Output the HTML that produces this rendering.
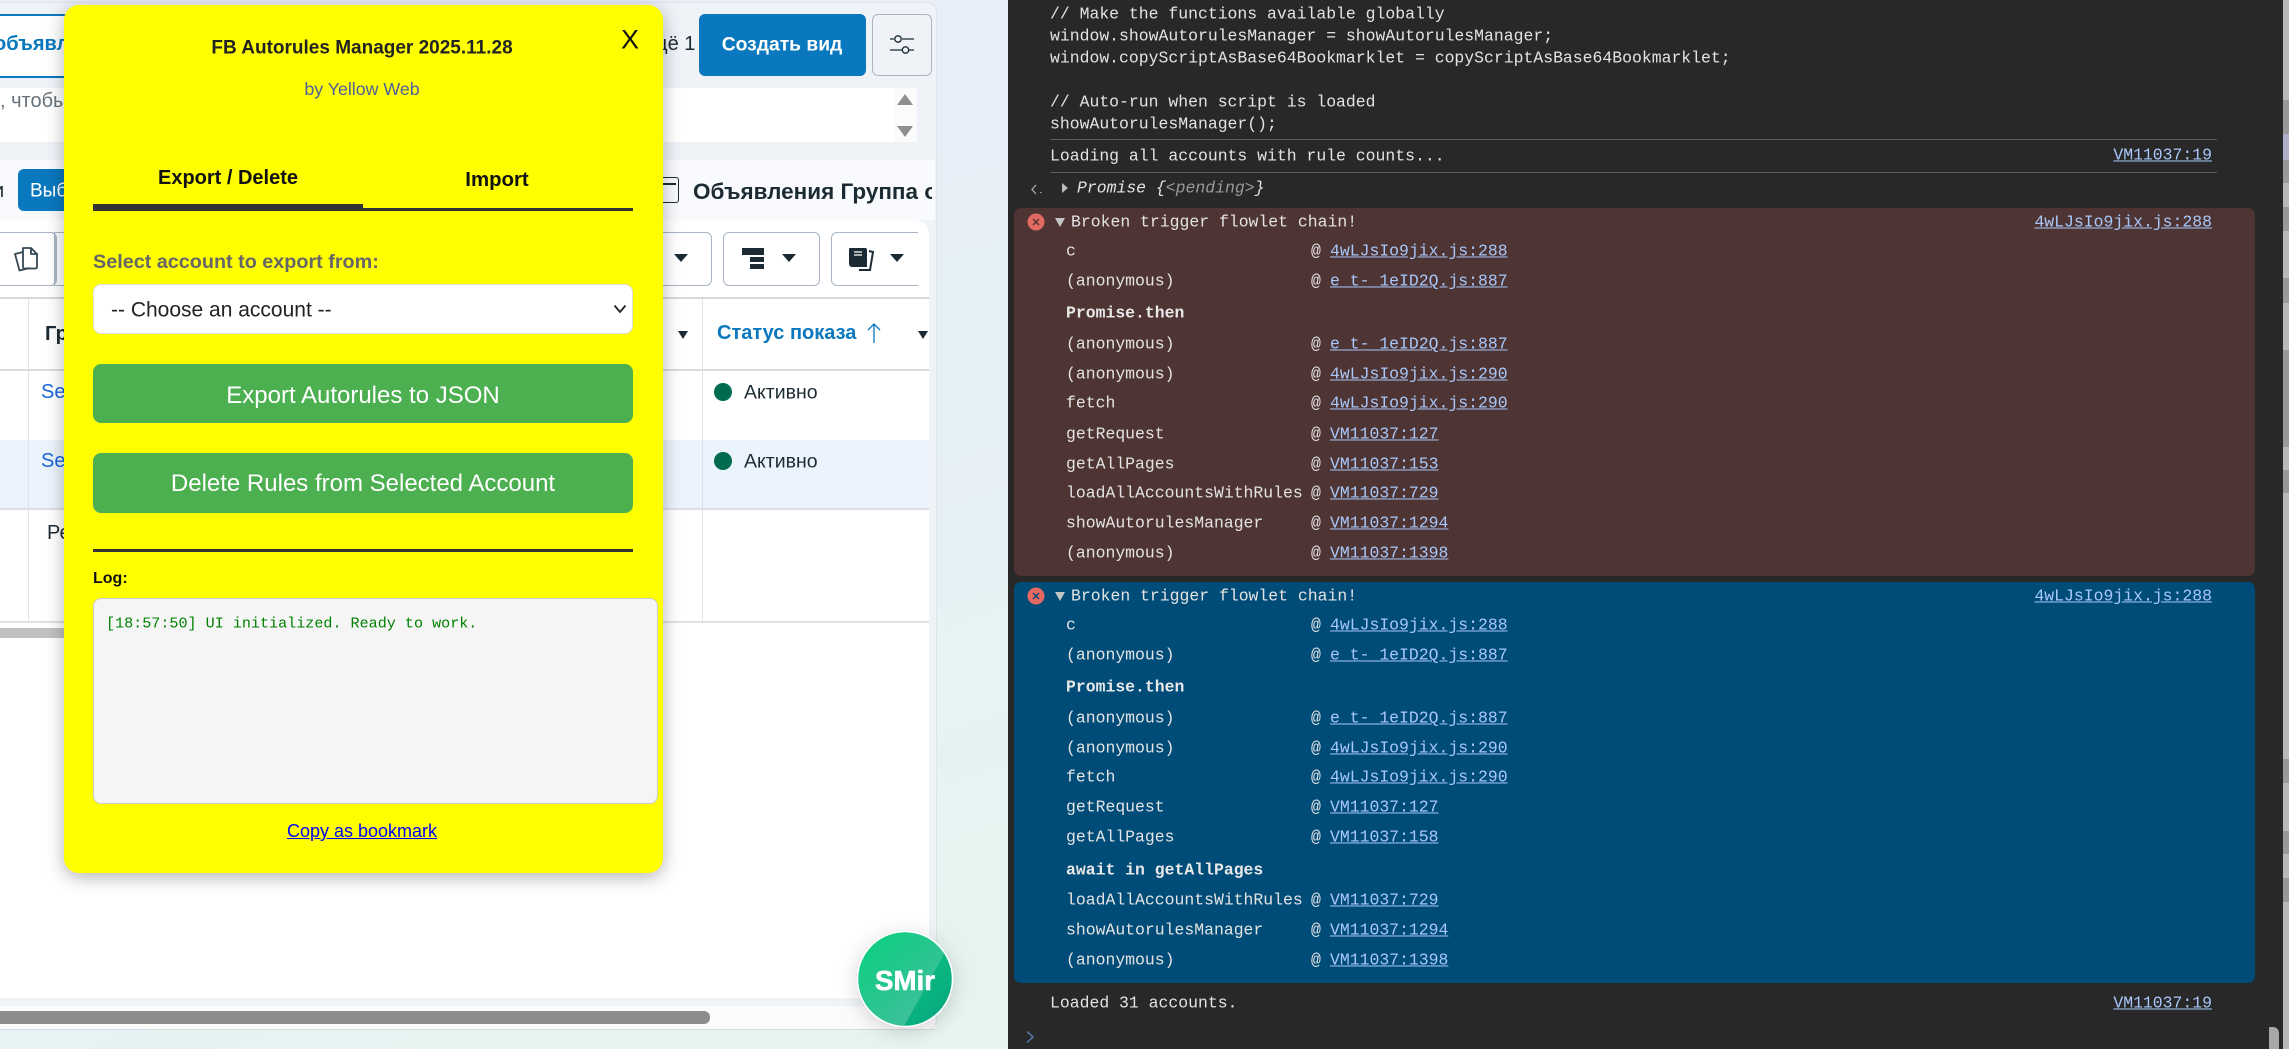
<!DOCTYPE html>
<html><head><meta charset="utf-8"><title>FB Autorules Manager</title>
<style>
html,body{margin:0;padding:0;width:2289px;height:1049px;overflow:hidden;background:#e7eff7}
body{position:relative;font-family:"Liberation Sans",sans-serif}
.b{position:absolute}
.t{position:absolute;white-space:nowrap;line-height:1;transform:translateY(-50%)}
.c{transform:translate(-50%,-50%)}
.d{position:absolute;white-space:nowrap;line-height:1;transform:translateY(calc(-50% + .7px));font-family:"Liberation Mono",monospace;font-size:16.45px;color:#e3e3e3}
.s{left:1066px}.at{left:1311px}.ln{left:1330px;color:#a8c7fa;text-decoration:underline}
.h{font-weight:bold;color:#e8e8e8}
.r{right:77px;color:#a8c7fa;text-decoration:underline}
.ct{position:absolute;width:0;height:0;border-left:7px solid transparent;border-right:7px solid transparent;border-top:8px solid #1c2b33}
.ro{position:absolute;left:2283px;width:6px;background:#999}
.btn{position:absolute;left:93px;width:540px;background:#4caf50;border-radius:8px;color:#fff;text-align:center;font-size:24px}
</style></head>
<body>
<div class="b" style="left:0;top:0;width:1008px;height:1049px;background:linear-gradient(160deg,#e9eef8 0%,#e6f0f7 55%,#e6f5ee 100%)"></div>
<!-- left panel -->
<div class="b" style="left:-10px;top:2px;width:945px;height:1026px;background:#eff3f8;border:1px solid #dfe3ea;border-radius:10px"></div>
<div class="b" style="left:0;top:14px;width:80px;height:60px;border-top:2px solid #0a78be;border-bottom:2px solid #0a78be;background:#fff"></div>
<div class="t" style="left:-6px;top:44px;font-size:20px;font-weight:bold;color:#0a78be">объявл</div>
<div class="t" style="left:640px;top:44px;font-size:20px;color:#1c2b33">ещё 1</div>
<div class="b" style="left:699px;top:14px;width:167px;height:62px;background:#0a78be;border-radius:6px"></div>
<div class="t c" style="left:782px;top:45px;font-size:19.300px;font-weight:bold;color:#fff">Создать вид</div>
<div class="b" style="left:872px;top:14px;width:58px;height:60px;border:1px solid #aab5c3;border-radius:6px"></div>
<svg class="b" style="left:885px;top:30px" width="34" height="28" viewBox="885 30 34 28" fill="none" stroke="#1c2b33" stroke-width="1.300"><path d="M890 39h4M902 39h12M890 50h12M909 50h5"/><circle cx="898" cy="39" r="3.200"/><circle cx="905.500" cy="50" r="3.200"/></svg>
<!-- search -->
<div class="b" style="left:0;top:88px;width:917px;height:54px;background:#fff"></div>
<div class="b" style="left:894px;top:88px;width:23px;height:54px;background:#fbfbfb"></div>
<div class="t" style="left:0;top:101px;font-size:20px;color:#67727c">, чтобы</div>
<div class="b" style="left:897px;top:94px;width:0;height:0;border-left:8px solid transparent;border-right:8px solid transparent;border-bottom:11px solid #8f8f8f"></div>
<div class="b" style="left:897px;top:126px;width:0;height:0;border-left:8px solid transparent;border-right:8px solid transparent;border-top:11px solid #8f8f8f"></div>
<!-- section -->
<div class="b" style="left:0;top:160px;width:935px;height:60px;background:#f8fafd"></div>
<div class="b" style="left:18px;top:169px;width:60px;height:42px;background:#0a78be;border-radius:6px"></div>
<div class="t" style="left:30px;top:191px;font-size:19px;color:#fff">Выб</div>
<div class="t" style="left:-7px;top:191px;font-size:20px;color:#1c2b33">и</div>
<div class="b" style="left:650px;top:177px;width:27px;height:24px;border:1.500px solid #1c2b33;border-radius:3px"></div>
<div class="b" style="left:650px;top:183px;width:26px;height:1.500px;background:#1c2b33"></div>
<div class="b" style="left:693px;top:160px;width:239px;height:60px;overflow:hidden">
<div class="t" style="left:0;top:32px;font-size:22.500px;font-weight:bold;color:#1c2b33">Объявления Группа объявлений</div></div>
<!-- table container -->
<div class="b" style="left:0;top:220px;width:929px;height:778px;background:#fff;border-radius:0 14px 0 0"></div>
<div class="b" style="left:-10px;top:232px;width:64px;height:52px;border:1px solid #a8b5c4;border-radius:6px;border-right-width:2px"></div>
<div class="b" style="left:54px;top:232px;width:20px;height:52px;border-top:1px solid #a8b5c4;border-bottom:1px solid #a8b5c4;border-left:1px solid #a8b5c4"></div>
<svg class="b" style="left:10px;top:242px" width="32" height="32" viewBox="10 242 32 32" fill="none" stroke="#344854" stroke-width="1.800" stroke-linejoin="round"><path d="M23 248h8l6 6v13a1.500 1.500 0 0 1-1.500 1.500H24.500a1.500 1.500 0 0 1-1.500-1.500z"/><path d="M31 248v6h6"/><path d="M23 252l-8 2 4.500 16.500 10-2.500"/></svg>
<div class="b" style="left:580px;top:232px;width:130px;height:52px;border:1px solid #a8b5c4;border-radius:6px"></div>
<div class="ct" style="left:674px;top:254px"></div>
<div class="b" style="left:723px;top:232px;width:95px;height:52px;border:1px solid #a8b5c4;border-radius:6px"></div>
<div class="b" style="left:742px;top:248px;width:22px;height:7px;background:#1c2b33"></div>
<div class="b" style="left:750px;top:257px;width:14px;height:5px;background:#1c2b33"></div>
<div class="b" style="left:750px;top:264px;width:14px;height:5px;background:#1c2b33"></div>
<div class="ct" style="left:782px;top:254px"></div>
<div class="b" style="left:831px;top:232px;width:86px;height:52px;border:1px solid #a8b5c4;border-right:0;border-radius:6px 0 0 6px;box-sizing:content-box"></div>
<svg class="b" style="left:847px;top:245px" width="28" height="28" viewBox="847 245 28 28"><path d="M850 248h15a2 2 0 0 1 2 2v17h-15a3 3 0 0 1-3-3v-15a1 1 0 0 1 1-1z" fill="#1c2b33"/><path d="M854 252h8M854 255h8" stroke="#fff" stroke-width="1.300"/><path d="M869 251l4 1-3 18-11 0" fill="none" stroke="#1c2b33" stroke-width="2"/></svg>
<div class="ct" style="left:890px;top:254px"></div>
<!-- table -->
<div class="b" style="left:0;top:297px;width:929px;height:2px;background:#d5d8dd"></div>
<div class="b" style="left:0;top:369px;width:929px;height:2px;background:#d8dbe0"></div>
<div class="b" style="left:0;top:440px;width:929px;height:69px;background:#ebf3fc"></div>
<div class="b" style="left:0;top:508px;width:929px;height:2px;background:#dde0e5"></div>
<div class="b" style="left:0;top:621px;width:929px;height:2px;background:#dde0e5"></div>
<div class="b" style="left:28px;top:299px;width:1px;height:323px;background:#dfe2e6"></div>
<div class="b" style="left:702px;top:299px;width:1px;height:323px;background:#dfe2e6"></div>
<div class="t" style="left:45px;top:334px;font-size:20px;font-weight:bold;color:#1c2b33">Гр</div>
<div class="ct" style="left:678px;top:331px;border-left-width:5px;border-right-width:5px"></div>
<div class="t" style="left:717px;top:333px;font-size:20px;font-weight:bold;color:#0a78be">Статус показа</div>
<svg class="b" style="left:866px;top:322px" width="16" height="22" viewBox="0 0 16 22" fill="none" stroke="#0a78be" stroke-width="1.300"><path d="M8 21V2M2 8l6-6 6 6"/></svg>
<div class="ct" style="left:918px;top:331px;border-left-width:5px;border-right-width:5px"></div>
<div class="t" style="left:41px;top:392px;font-size:20px;color:#1a66d8">Se</div>
<div class="t" style="left:41px;top:461px;font-size:20px;color:#1a66d8">Se</div>
<div class="t" style="left:47px;top:533px;font-size:20px;color:#1c2b33">Ре</div>
<div class="b" style="left:714px;top:383px;width:18px;height:18px;border-radius:50%;background:#006b4f"></div>
<div class="t" style="left:744px;top:393px;font-size:19.500px;color:#1c2b33">Активно</div>
<div class="b" style="left:714px;top:452px;width:18px;height:18px;border-radius:50%;background:#006b4f"></div>
<div class="t" style="left:744px;top:462px;font-size:19.500px;color:#1c2b33">Активно</div>
<div class="b" style="left:0;top:628px;width:80px;height:10px;background:#c1c1c1"></div>
<!-- bottom scrollbar -->
<div class="b" style="left:0;top:998px;width:935px;height:31px;background:#f0f3f7;border-bottom:1px solid #d8dbdf"></div>
<div class="b" style="left:0;top:1006px;width:935px;height:23px;background:#fbfbfb;border-radius:0 0 8px 0"></div>
<div class="b" style="left:0;top:1011px;width:710px;height:13px;background:#8c8c8c;border-radius:0 6px 6px 0"></div>
<!-- smir -->
<svg class="b" style="left:850px;top:925px;filter:drop-shadow(0 4px 10px rgba(0,0,0,.16))" width="110" height="110" viewBox="850 925 110 110">
<defs><linearGradient id="g1" x1="0" y1="0" x2="1" y2="1"><stop offset="0" stop-color="#14d683"/><stop offset="1" stop-color="#05a37f"/></linearGradient>
<linearGradient id="g2" x1="0" y1="0" x2="1" y2="1"><stop offset="0.2" stop-color="#fff" stop-opacity="0"/><stop offset="1" stop-color="#fff" stop-opacity=".32"/></linearGradient>
<clipPath id="cc"><circle cx="905" cy="979" r="47"/></clipPath></defs>
<circle cx="905" cy="979" r="47.500" fill="url(#g1)" stroke="#fff" stroke-width="1.500"/>
<polygon clip-path="url(#cc)" points="850,925 960,925 902,1030 850,1030" fill="url(#g2)"/>
<text x="905" y="990" text-anchor="middle" font-family="Liberation Sans, sans-serif" font-weight="bold" font-size="28" fill="#fff" stroke="#fff" stroke-width=".6" textLength="60" lengthAdjust="spacingAndGlyphs">SMir</text>
</svg>
<!-- modal -->
<div class="b" style="left:64px;top:5px;width:599px;height:868px;background:#ff0;border-radius:15px;box-shadow:0 4px 18px rgba(0,0,0,.3)"></div>
<div class="t c" style="left:362px;top:48px;font-size:19px;font-weight:bold;color:#222">FB Autorules Manager 2025.11.28</div>
<div class="t c" style="left:630px;top:40px;font-size:27px;color:#111">X</div>
<div class="t c" style="left:362px;top:90px;font-size:17.800px;color:#4e5f9a">by Yellow Web</div>
<div class="t c" style="left:228px;top:178px;font-size:20px;font-weight:bold;color:#111">Export / Delete</div>
<div class="t c" style="left:497px;top:180px;font-size:20.400px;font-weight:bold;color:#111">Import</div>
<div class="b" style="left:93px;top:208px;width:540px;height:3px;background:#333"></div>
<div class="b" style="left:93px;top:204px;width:270px;height:7px;background:#333"></div>
<div class="t" style="left:93px;top:263px;font-size:19.800px;font-weight:bold;color:#666">Select account to export from:</div>
<div class="b" style="left:93px;top:284px;width:538px;height:48px;background:#fff;border:1px solid #ddd;border-radius:8px"></div>
<div class="t" style="left:111px;top:310px;font-size:21px;color:#222">-- Choose an account --</div>
<svg class="b" style="left:613px;top:304px" width="14" height="10" viewBox="0 0 14 10" fill="none" stroke="#222" stroke-width="1.800"><path d="M1.500 1.500L7 8l5.500-6.500"/></svg>
<div class="btn" style="top:364px;height:59px;line-height:63px">Export Autorules to JSON</div>
<div class="btn" style="top:453px;height:60px;line-height:62px">Delete Rules from Selected Account</div>
<div class="b" style="left:93px;top:549px;width:540px;height:3px;background:#333"></div>
<div class="t" style="left:93px;top:579px;font-size:16px;font-weight:bold;color:#111">Log:</div>
<div class="b" style="left:93px;top:598px;width:563px;height:204px;background:#f5f5f5;border:1px solid #ccc;border-radius:8px"></div>
<div class="t" style="left:106px;top:624px;font-family:'Liberation Mono',monospace;font-size:15.100px;color:#008000">[18:57:50] UI initialized. Ready to work.</div>
<div class="t c" style="left:362px;top:831px;font-size:18px;color:#00f;text-decoration:underline">Copy as bookmark</div>
<!-- devtools -->
<div class="b" style="left:1008px;top:0;width:1281px;height:1049px;background:#282828"></div>
<div class="d" style="left:1050px;top:14px">// Make the functions available globally</div>
<div class="d" style="left:1050px;top:36px">window.showAutorulesManager = showAutorulesManager;</div>
<div class="d" style="left:1050px;top:58px">window.copyScriptAsBase64Bookmarklet = copyScriptAsBase64Bookmarklet;</div>
<div class="d" style="left:1050px;top:102px">// Auto-run when script is loaded</div>
<div class="d" style="left:1050px;top:124px">showAutorulesManager();</div>
<div class="b" style="left:1050px;top:139px;width:1167px;height:1px;background:#5c5c5c"></div>
<div class="d" style="left:1050px;top:156px">Loading all accounts with rule counts...</div>
<div class="d r" style="top:155px">VM11037:19</div>
<div class="b" style="left:1050px;top:172px;width:1167px;height:1px;background:#5c5c5c"></div>
<svg class="b" style="left:1030px;top:182px" width="14" height="14" viewBox="0 0 14 14" fill="none" stroke="#aaa" stroke-width="1.300"><path d="M6 3L2 7.500 6 12M10 10.500h1.500"/></svg>
<div class="b" style="left:1062px;top:183px;width:0;height:0;border-top:5px solid transparent;border-bottom:5px solid transparent;border-left:6px solid #bbb"></div>
<div class="d" style="left:1077px;top:188px;font-style:italic">Promise {<span style="color:#9a9a9a">&lt;pending&gt;</span>}</div>
<!-- red -->
<div class="b" style="left:1014px;top:208px;width:1241px;height:368px;background:#4e3534;border-radius:7px"></div>
<svg class="b" style="left:1027px;top:213px" width="18" height="18" viewBox="0 0 18 18"><circle cx="9" cy="9" r="8.500" fill="#e46962"/><path d="M6 6l6 6M12 6l-6 6" stroke="#4e3534" stroke-width="1.400"/></svg>
<div class="b" style="left:1055px;top:218px;width:0;height:0;border-left:5.500px solid transparent;border-right:5.500px solid transparent;border-top:9px solid #c4c4c4"></div>
<div class="d" style="left:1071px;top:222px">Broken trigger flowlet chain!</div>
<div class="d r" style="top:222px">4wLJsIo9jix.js:288</div>
<div class="d s" style="top:251px">c</div><div class="d at" style="top:251px">@</div><div class="d ln" style="top:251px">4wLJsIo9jix.js:288</div>
<div class="d s" style="top:281px">(anonymous)</div><div class="d at" style="top:281px">@</div><div class="d ln" style="top:281px">e_t-_1eID2Q.js:887</div>
<div class="d s h" style="top:313px">Promise.then</div>
<div class="d s" style="top:344px">(anonymous)</div><div class="d at" style="top:344px">@</div><div class="d ln" style="top:344px">e_t-_1eID2Q.js:887</div>
<div class="d s" style="top:374px">(anonymous)</div><div class="d at" style="top:374px">@</div><div class="d ln" style="top:374px">4wLJsIo9jix.js:290</div>
<div class="d s" style="top:403px">fetch</div><div class="d at" style="top:403px">@</div><div class="d ln" style="top:403px">4wLJsIo9jix.js:290</div>
<div class="d s" style="top:434px">getRequest</div><div class="d at" style="top:434px">@</div><div class="d ln" style="top:434px">VM11037:127</div>
<div class="d s" style="top:464px">getAllPages</div><div class="d at" style="top:464px">@</div><div class="d ln" style="top:464px">VM11037:153</div>
<div class="d s" style="top:493px">loadAllAccountsWithRules</div><div class="d at" style="top:493px">@</div><div class="d ln" style="top:493px">VM11037:729</div>
<div class="d s" style="top:523px">showAutorulesManager</div><div class="d at" style="top:523px">@</div><div class="d ln" style="top:523px">VM11037:1294</div>
<div class="d s" style="top:553px">(anonymous)</div><div class="d at" style="top:553px">@</div><div class="d ln" style="top:553px">VM11037:1398</div>
<!-- blue -->
<div class="b" style="left:1014px;top:582px;width:1241px;height:401px;background:#004c78;border-radius:7px"></div>
<svg class="b" style="left:1027px;top:587px" width="18" height="18" viewBox="0 0 18 18"><circle cx="9" cy="9" r="8.500" fill="#e46962"/><path d="M6 6l6 6M12 6l-6 6" stroke="#004c78" stroke-width="1.400"/></svg>
<div class="b" style="left:1055px;top:592px;width:0;height:0;border-left:5.500px solid transparent;border-right:5.500px solid transparent;border-top:9px solid #c4c4c4"></div>
<div class="d" style="left:1071px;top:596px">Broken trigger flowlet chain!</div>
<div class="d r" style="top:596px">4wLJsIo9jix.js:288</div>
<div class="d s" style="top:625px">c</div><div class="d at" style="top:625px">@</div><div class="d ln" style="top:625px">4wLJsIo9jix.js:288</div>
<div class="d s" style="top:655px">(anonymous)</div><div class="d at" style="top:655px">@</div><div class="d ln" style="top:655px">e_t-_1eID2Q.js:887</div>
<div class="d s h" style="top:687px">Promise.then</div>
<div class="d s" style="top:718px">(anonymous)</div><div class="d at" style="top:718px">@</div><div class="d ln" style="top:718px">e_t-_1eID2Q.js:887</div>
<div class="d s" style="top:748px">(anonymous)</div><div class="d at" style="top:748px">@</div><div class="d ln" style="top:748px">4wLJsIo9jix.js:290</div>
<div class="d s" style="top:777px">fetch</div><div class="d at" style="top:777px">@</div><div class="d ln" style="top:777px">4wLJsIo9jix.js:290</div>
<div class="d s" style="top:807px">getRequest</div><div class="d at" style="top:807px">@</div><div class="d ln" style="top:807px">VM11037:127</div>
<div class="d s" style="top:837px">getAllPages</div><div class="d at" style="top:837px">@</div><div class="d ln" style="top:837px">VM11037:158</div>
<div class="d s h" style="top:870px">await in getAllPages</div>
<div class="d s" style="top:900px">loadAllAccountsWithRules</div><div class="d at" style="top:900px">@</div><div class="d ln" style="top:900px">VM11037:729</div>
<div class="d s" style="top:930px">showAutorulesManager</div><div class="d at" style="top:930px">@</div><div class="d ln" style="top:930px">VM11037:1294</div>
<div class="d s" style="top:960px">(anonymous)</div><div class="d at" style="top:960px">@</div><div class="d ln" style="top:960px">VM11037:1398</div>
<div class="d" style="left:1050px;top:1003px">Loaded 31 accounts.</div>
<div class="d r" style="top:1003px">VM11037:19</div>
<svg class="b" style="left:1025px;top:1030px" width="10" height="14" viewBox="0 0 10 14" fill="none" stroke="#5f7bb0" stroke-width="1.500"><path d="M2 1.500L8 7l-6 5.500"/></svg>
<!-- right sliver -->
<div class="b" style="left:2283px;top:0;width:6px;height:1049px;background:#b9b9b9"></div>
<div class="ro" style="top:100px;height:34px"></div>
<div class="ro" style="top:134px;height:26px;background:#b0b0c8"></div>
<div class="ro" style="top:160px;height:23px"></div>
<div class="ro" style="top:207px;height:24px"></div>
<div class="ro" style="top:278px;height:25px"></div>
<div class="ro" style="top:350px;height:97px"></div>
<div class="ro" style="top:470px;height:23px"></div>
<div class="ro" style="top:759px;height:24px"></div>
<div class="ro" style="top:831px;height:23px"></div>
<div class="ro" style="top:878px;height:24px"></div>
<div class="b" style="left:2269px;top:1027px;width:10px;height:22px;background:#a8a8a8;border-radius:0 6px 0 0"></div>
</body></html>
